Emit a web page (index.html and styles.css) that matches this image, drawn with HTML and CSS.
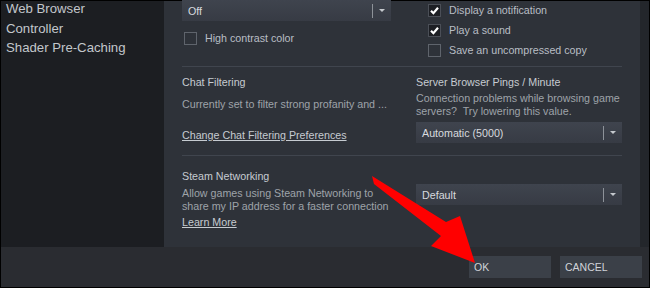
FILE: index.html
```html
<!DOCTYPE html>
<html lang="en">
<head>
    <meta charset="UTF-8">
    <title>Steam Settings</title>
    <link rel="stylesheet" href="styles.css">
</head>
<body>
    <div class="window">
        <div class="main">
            <div class="sidebar">
                <div class="nav-item">Web Browser</div>
                <div class="nav-item">Controller</div>
                <div class="nav-item">Shader Pre-Caching</div>
            </div>

            <div class="panel">
                <div class="section section-top">
                    <div class="col-left">
                        <div class="dropdown dropdown-off">
                            <span>Off</span>
                            <span class="dd-sep"></span>
                            <span class="dd-arrow"></span>
                        </div>
                        <div class="check-row contrast-row">
                            <span class="checkbox"></span>
                            <span class="check-label">High contrast color</span>
                        </div>
                    </div>
                    <div class="col-right">
                        <div class="check-row tight">
                            <span class="checkbox checked">
                                <svg viewBox="0 0 13 13" width="13" height="13"><path d="M3 6.8 L5.4 9.2 L10 3.8" fill="none" stroke="#fff" stroke-width="2.2"/></svg>
                            </span>
                            <span class="check-label">Display a notification</span>
                        </div>
                        <div class="check-row tight">
                            <span class="checkbox checked">
                                <svg viewBox="0 0 13 13" width="13" height="13"><path d="M3 6.8 L5.4 9.2 L10 3.8" fill="none" stroke="#fff" stroke-width="2.2"/></svg>
                            </span>
                            <span class="check-label">Play a sound</span>
                        </div>
                        <div class="check-row tight">
                            <span class="checkbox"></span>
                            <span class="check-label">Save an uncompressed copy</span>
                        </div>
                    </div>
                </div>

                <div class="divider"></div>

                <div class="section section-chat">
                    <div class="col-left">
                        <div class="title">Chat Filtering</div>
                        <div class="desc chat-desc">Currently set to filter strong profanity and ...</div>
                        <a class="link chat-link">Change Chat Filtering Preferences</a>
                    </div>
                    <div class="col-right">
                        <div class="title">Server Browser Pings / Minute</div>
                        <div class="desc pings-desc">Connection problems while browsing game<br>servers?&nbsp; Try lowering this value.</div>
                        <div class="dropdown pings-dd">
                            <span>Automatic (5000)</span>
                            <span class="dd-sep"></span>
                            <span class="dd-arrow"></span>
                        </div>
                    </div>
                </div>

                <div class="divider"></div>

                <div class="section section-net">
                    <div class="col-left">
                        <div class="title">Steam Networking</div>
                        <div class="desc net-desc">Allow games using Steam Networking to<br>share my IP address for a faster connection</div>
                        <a class="link net-link">Learn More</a>
                    </div>
                    <div class="col-right net-right">
                        <div class="dropdown">
                            <span>Default</span>
                            <span class="dd-sep"></span>
                            <span class="dd-arrow"></span>
                        </div>
                    </div>
                </div>
            </div>
            <div class="edge"></div>
        </div>

        <div class="footer">
            <button class="btn btn-ok">OK</button>
            <button class="btn">CANCEL</button>
        </div>
    </div>

    <svg class="arrow" width="650" height="288" viewBox="0 0 650 288">
        <polygon points="372,176 446,222 460,216 475,263 431,246 441,236 374,184" fill="#ff0000"/>
    </svg>
</body>
</html>
```

FILE: styles.css
```css
body {
    margin: 0;
    background: #000;
    font-family: "Liberation Sans", Arial, sans-serif;
    position: relative;
    width: 650px;
    height: 288px;
    overflow: hidden;
}

.window {
    position: absolute;
    left: 1px;
    top: 1px;
    width: 648px;
    height: 286px;
    display: flex;
    flex-direction: column;
}

.main {
    display: flex;
    height: 246px;
}

.sidebar {
    width: 163px;
    background: #1c1e22;
    padding-left: 5px;
    box-sizing: border-box;
}

.nav-item {
    color: #c3c7cc;
    font-size: 13.2px;
    height: 19.5px;
    line-height: 19.5px;
    margin-top: -2px;
    margin-bottom: 2px;
}

.panel {
    width: 476px;
    background: #2e3239;
    padding-left: 18px;
    box-sizing: border-box;
}

.edge {
    width: 9px;
    background: #23262b;
}

.section {
    display: flex;
}

.col-left {
    width: 234px;
}

.col-right {
    width: 206px;
}

.section-top {
    height: 65px;
}

.divider {
    width: 440px;
    height: 1px;
    background: #40454e;
}

.dropdown {
    display: flex;
    align-items: center;
    height: 21px;
    background: linear-gradient(#3f444e, #373b44);
    color: #d7dadf;
    font-size: 10.7px;
    padding-left: 6px;
    box-sizing: border-box;
}

.dropdown span:first-child {
    flex: 1;
}

.dropdown-off {
    width: 209px;
    margin-top: -1px;
}

.dd-sep {
    width: 1px;
    height: 14px;
    background: #8d9299;
}

.dd-arrow {
    width: 0;
    height: 0;
    border-left: 3px solid transparent;
    border-right: 3px solid transparent;
    border-top: 3px solid #c5c9ce;
    margin: 0 6px 0 6px;
}

.check-row {
    display: flex;
    align-items: center;
    height: 20px;
    font-size: 10.7px;
}

.contrast-row {
    margin-top: 7px;
    padding-left: 2px;
}

.col-right .check-row {
    padding-left: 12px;
}

.col-right .check-row:first-child {
    margin-top: -1px;
}

.checkbox {
    width: 13px;
    height: 13px;
    border: 1px solid #5f646c;
    box-sizing: border-box;
    margin-right: 8px;
    display: flex;
    align-items: center;
    justify-content: center;
}

.checkbox.checked {
    background: #1d1f24;
    border-color: #4b4f57;
}

.checkbox svg {
    flex: none;
}

.check-label {
    color: #b9bec5;
}

.title {
    color: #c6cbd1;
    font-size: 10.7px;
    line-height: 14px;
}

.desc {
    color: #9ea3a9;
    font-size: 10.7px;
}

.link {
    display: inline-block;
    color: #c6cbd1;
    font-size: 10.7px;
    line-height: 14px;
    text-decoration: underline;
}

.section-chat {
    height: 88px;
    padding-top: 8px;
    box-sizing: border-box;
}

.chat-desc {
    line-height: 14px;
    margin-top: 8px;
}

.chat-link {
    margin-top: 17px;
}

.pings-desc {
    line-height: 13px;
    margin-top: 3px;
    white-space: nowrap;
}

.pings-dd {
    margin-top: 4px;
}

.section-net {
    padding-top: 13px;
}

.net-desc {
    line-height: 12.5px;
    margin-top: 4px;
    white-space: nowrap;
}

.net-link {
    margin-top: 3px;
}

.net-right {
    padding-top: 15px;
}

.footer {
    flex: 1;
    background: #2a2c31;
    display: flex;
    justify-content: flex-end;
    align-items: flex-start;
    padding-top: 9px;
    padding-right: 7px;
    gap: 9px;
    box-sizing: border-box;
}

.btn {
    width: 82px;
    height: 22px;
    border: none;
    background: #3b4048;
    color: #d0d3d8;
    font-family: "Liberation Sans", Arial, sans-serif;
    font-size: 10.5px;
    text-align: left;
    padding-left: 5px;
}

.arrow {
    position: absolute;
    left: 0;
    top: 0;
    pointer-events: none;
}
```
